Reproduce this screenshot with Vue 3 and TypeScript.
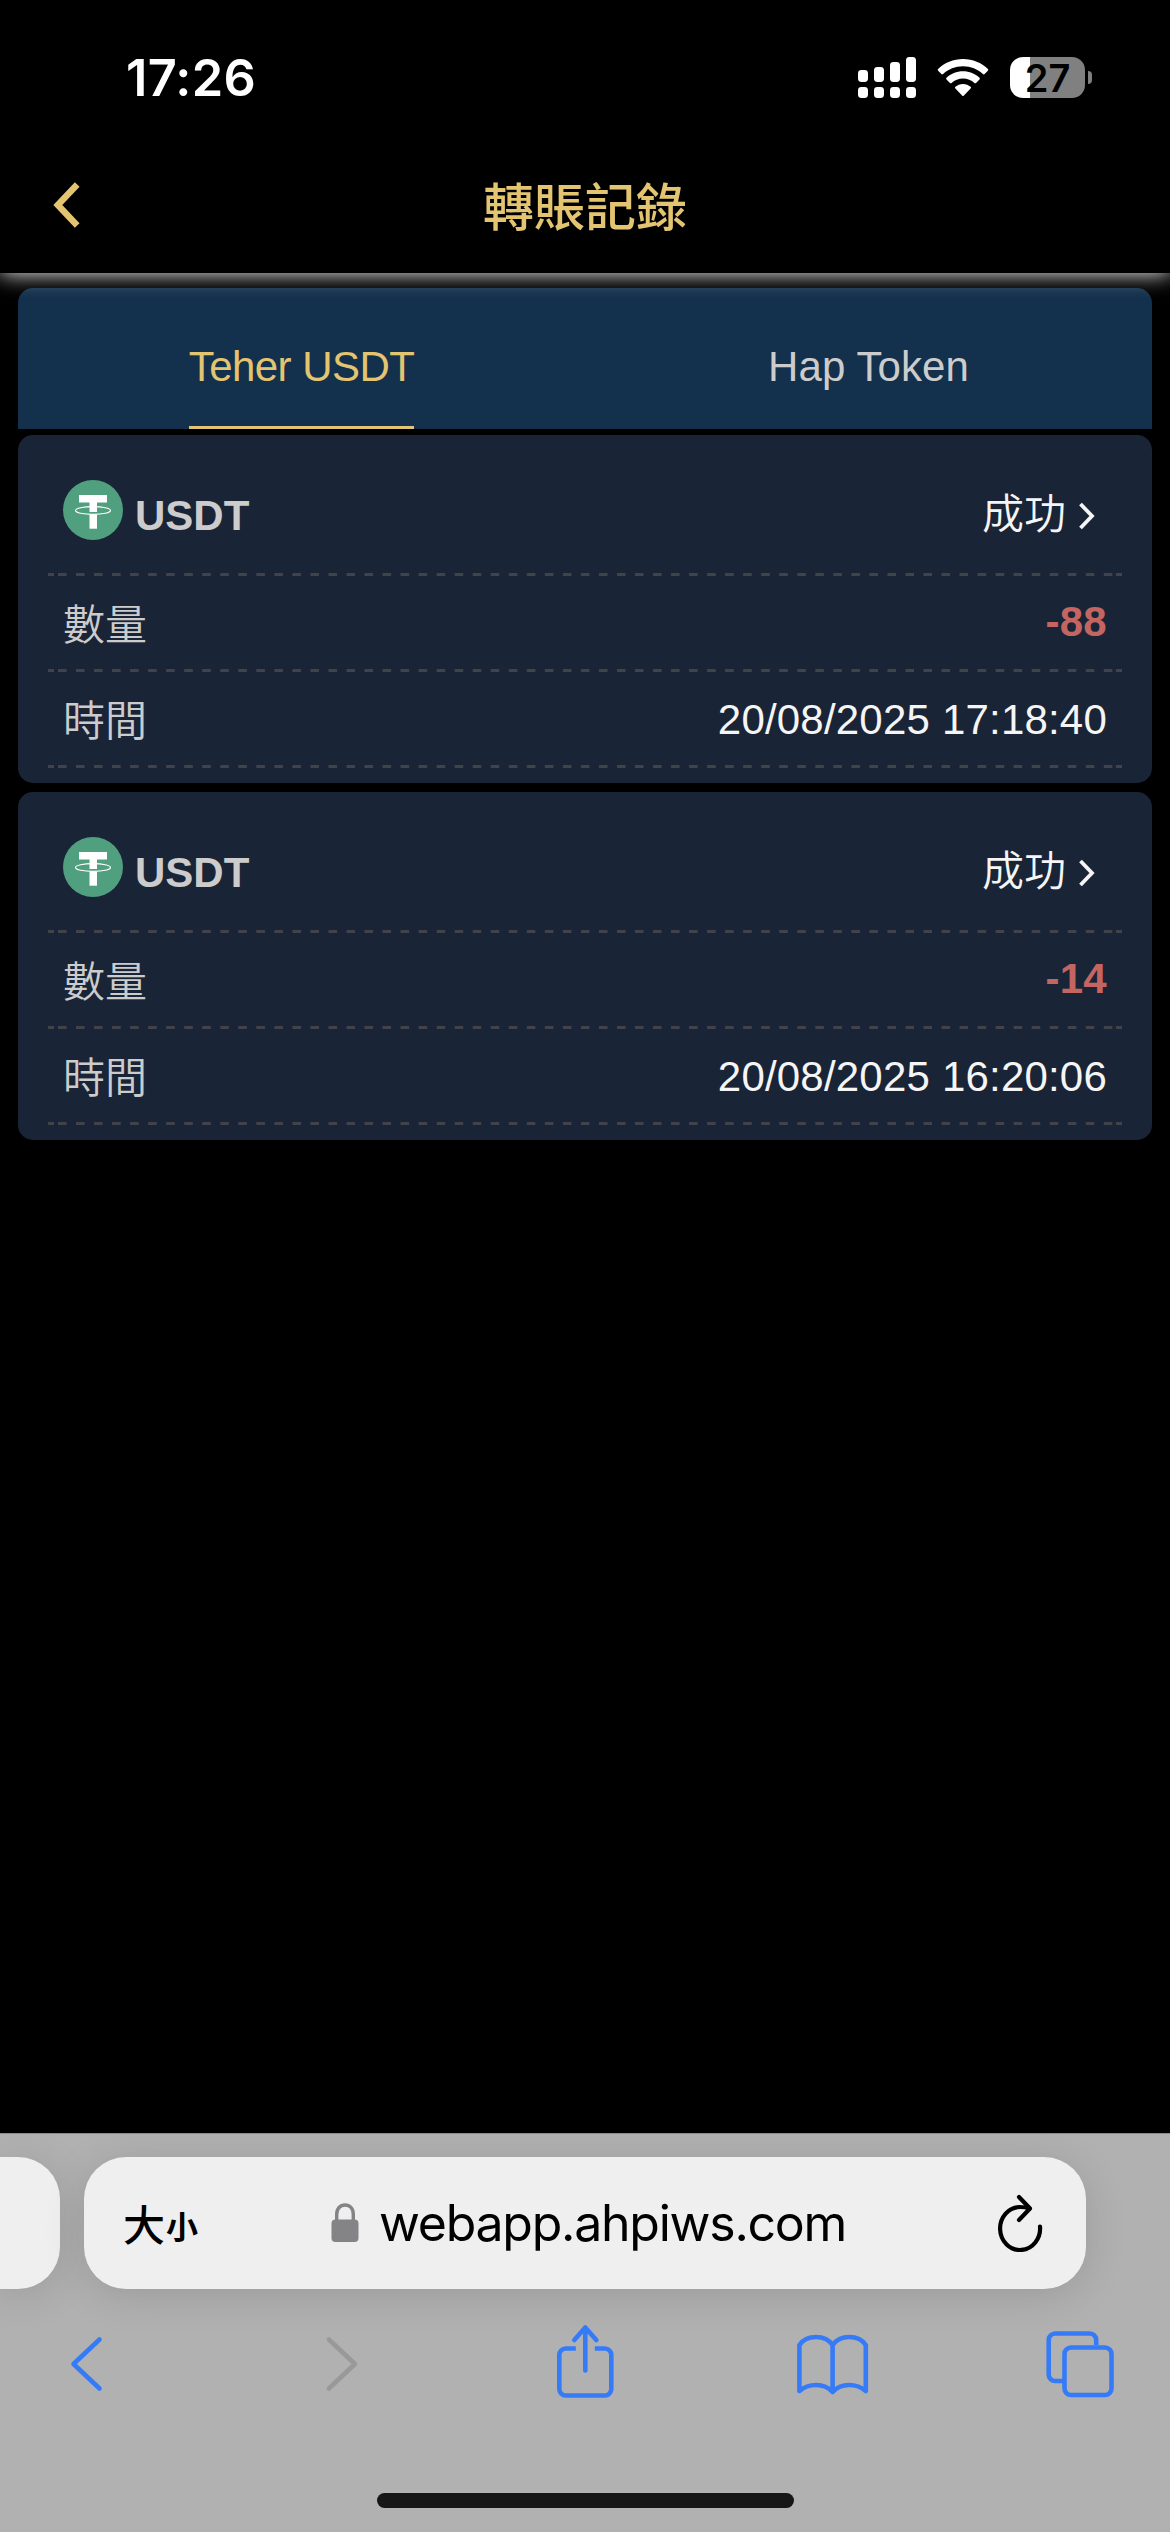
<script setup lang="ts">
interface TransferRecord {
  token: string
  status: string
  amount: string
  time: string
}

const tabs: string[] = ['Teher USDT', 'Hap Token']
const activeTab = 0

const records: TransferRecord[] = [
  { token: 'USDT', status: '成功', amount: '-88', time: '20/08/2025 17:18:40' },
  { token: 'USDT', status: '成功', amount: '-14', time: '20/08/2025 16:20:06' },
]

const signal = [12, 15, 20, 25]
</script>

<template>
  <div class="phone">
    <div class="status">
      <span class="clock">17:26</span>
      <div class="indicators">
        <svg class="cell" width="60" height="42" viewBox="0 0 60 42" fill="#fff">
          <template v-for="(h, i) in signal" :key="i">
            <rect :x="1 + i * 16" :y="25 - h" width="10" :height="h" rx="3.4" />
            <rect :x="1 + i * 16" y="30" width="10" height="11" rx="3.4" />
          </template>
        </svg>
        <svg class="wifi" width="52" height="40" viewBox="0 0 52 40" fill="#fff">
          <path d="M26 2C16.300 2 7.500 5.800 1.100 12a1.200 1.200 0 0 0 0 1.700L4.400 17a1.200 1.200 0 0 0 1.700 0C11.300 12.100 18.300 9.200 26 9.200S40.700 12.100 45.900 17a1.200 1.200 0 0 0 1.700 0l3.300-3.300a1.200 1.200 0 0 0 0-1.700C44.500 5.800 35.700 2 26 2Z" />
          <path d="M26 14.300c-6.400 0-12.200 2.500-16.500 6.500a1.200 1.200 0 0 0 0 1.700l3.500 3.400a1.200 1.200 0 0 0 1.600 0c3-2.700 7-4.400 11.400-4.400s8.400 1.700 11.400 4.400a1.200 1.200 0 0 0 1.600 0l3.500-3.400a1.200 1.200 0 0 0 0-1.700c-4.300-4-10.100-6.500-16.500-6.500Z" />
          <path d="M26 27c-2.900 0-5.600 1.100-7.600 2.800a1.200 1.200 0 0 0 0 1.800l6.700 6.900a1.200 1.200 0 0 0 1.800 0l6.700-6.900a1.200 1.200 0 0 0 0-1.800C31.600 28.100 28.900 27 26 27Z" />
        </svg>
        <div class="battery">
          <div class="cellbox"><span>27</span></div>
          <i class="nub"></i>
        </div>
      </div>
    </div>

    <header class="bar">
      <svg class="back" width="32" height="50" viewBox="0 0 32 50" fill="none" stroke="#e3c470" stroke-width="6.500">
        <path d="M28.200 4.500 8.800 25 28.200 45.500" />
      </svg>
      <h1>轉賬記錄</h1>
    </header>

    <main>
      <nav class="tabs">
        <div v-for="(t, i) in tabs" :key="t" class="tab">
          <span :class="{ active: i === activeTab }">{{ t }}</span>
        </div>
      </nav>

      <section v-for="r in records" :key="r.time" class="card">
        <div class="row head">
          <svg class="coin" width="60" height="60" viewBox="0 0 60 60">
            <circle cx="30" cy="30" r="30" fill="#509f7e" />
            <path d="M16 15h28v7.500h-10v9.500h-7.500v-9.500H16Z" fill="#fff" />
            <ellipse cx="30" cy="30.500" rx="17.500" ry="3.900" fill="none" stroke="#fff" stroke-width="1.200" />
            <path d="M26.500 34.500h7.500v14.200h-7.500Z" fill="#fff" />
          </svg>
          <b>{{ r.token }}</b>
          <span class="state">{{ r.status }}</span>
          <svg class="more" width="20" height="30" viewBox="0 0 20 30" fill="none" stroke="#f5f5f5" stroke-width="3.800">
            <path d="M3.500 3 15 15 3.500 27" />
          </svg>
        </div>
        <div class="row">
          <span class="label">數量</span>
          <strong>{{ r.amount }}</strong>
        </div>
        <div class="row">
          <span class="label">時間</span>
          <time>{{ r.time }}</time>
        </div>
      </section>
    </main>

    <footer>
      <div class="pills">
        <div class="pill previous"></div>
        <div class="pill address">
          <span class="big">大</span><span class="small">小</span>
          <svg class="lock" width="28" height="40" viewBox="0 0 28 40">
            <path d="M5.700 18V11.500C5.700 5.500 9.200 2 14 2s8.300 3.500 8.300 9.500V18" fill="none" stroke="#848486" stroke-width="3.400" />
            <rect x=".500" y="16.500" width="27" height="22.500" rx="4" fill="#848486" />
          </svg>
          <span class="url">webapp.ahpiws.com</span>
          <svg class="reload" width="48" height="58" viewBox="0 0 48 58" fill="none" stroke="#000" stroke-width="4.200" stroke-linecap="round" stroke-linejoin="round">
            <path d="M44 32.500A20 21.500 0 1 1 24 13c3.500 0 6 .4 9.500 1.500" />
            <path d="M23 3 34 14.500 23 26" />
          </svg>
        </div>
      </div>
      <div class="tools">
        <svg width="76" height="80" viewBox="52 2324 76 80"><path d="M99.500 2339.500 73.500 2364 99.500 2388.500" /></svg>
        <svg width="76" height="80" viewBox="299.600 2324 76 80" class="off"><path d="M328.500 2339.500 354.500 2364 328.500 2388.500" /></svg>
        <svg width="76" height="80" viewBox="547.200 2324 76 80">
          <path class="butt" d="M576 2348.500H566a6.500 6.500 0 0 0-6.500 6.500v34a6.500 6.500 0 0 0 6.500 6.500h39a6.500 6.500 0 0 0 6.500-6.500v-34a6.500 6.500 0 0 0-6.500-6.500h-10" />
          <path d="M585.500 2370.500V2328M574.500 2340l11-12.500 11 12.500" />
        </svg>
        <svg width="76" height="80" viewBox="794.900 2324 76 80">
          <path d="M832.500 2345c-3.500-5-9.500-8-16.500-8s-13.500 3.200-16.700 8v46c4-3.500 10-6 16.700-6s12.500 2.500 16.500 7c4-4.500 10-7 16.500-7s12.700 2.500 16.700 6v-46c-3.200-4.800-9.700-8-16.700-8s-13 3-16.500 8Zm0 0v46" />
        </svg>
        <svg width="76" height="80" viewBox="1042.500 2324 76 80">
          <path class="butt" d="M1095.700 2345v-5a6.500 6.500 0 0 0-6.500-6.500h-34.500a6.500 6.500 0 0 0-6.500 6.500v34.500a6.500 6.500 0 0 0 6.500 6.500h8" />
          <rect x="1064" y="2347.500" width="47" height="47.500" rx="6.500" />
        </svg>
      </div>
      <div class="home"></div>
    </footer>
  </div>
</template>

<style>
html,
body {
  background: #000;
}
</style>

<style scoped>
* {
  box-sizing: border-box;
}
.phone {
  width: 1170px;
  height: 2532px;
  display: flex;
  flex-direction: column;
  overflow: hidden;
  background: #000;
  font-family: "Liberation Sans", "Noto Sans CJK TC", sans-serif;
  font-size: 42px;
}
.status {
  flex: none;
  height: 141px;
  padding: 47px 78px 0 126px;
  display: flex;
  justify-content: space-between;
  align-items: flex-start;
  font-family: Inter, sans-serif;
  color: #fff;
}
.clock {
  font-size: 50.5px;
  line-height: 62px;
  font-weight: 600;
  letter-spacing: 0.3px;
}
.indicators {
  display: flex;
  padding-top: 10px;
}
.wifi {
  margin: 0 21px 0 20px;
}
.battery {
  display: flex;
  align-items: center;
  height: 41px;
}
.cellbox {
  width: 75px;
  height: 41px;
  border-radius: 13px;
  background: linear-gradient(90deg, #fff 20px, #808080 20px);
  color: #000;
  font-size: 38px;
  font-weight: 600;
  line-height: 42px;
  text-align: center;
}
.nub {
  width: 4px;
  height: 13px;
  margin-left: 3px;
  border-radius: 0 6px 6px 0;
  background: #808080;
}
.bar {
  position: relative;
  z-index: 1;
  flex: none;
  height: 132px;
  display: flex;
  align-items: center;
  justify-content: center;
  background: #000;
  clip-path: inset(0 0 -60px 0);
  box-shadow: 0 0 21px #fff;
}
.back {
  position: absolute;
  left: 49px;
  top: 39px;
}
h1 {
  margin: 0;
  padding-top: 3px;
  font-size: 51px;
  line-height: 72px;
  font-weight: 500;
  color: #e3c470;
}
main {
  flex: none;
  height: 1860px;
  padding: 15px 18px 0;
}
.tabs {
  height: 141px;
  display: grid;
  grid-template-columns: 1fr 1fr;
  border-radius: 15px 15px 0 0;
  background: #13314c;
  color: #ccc;
  margin-bottom: 6px;
}
.tab {
  display: flex;
  justify-content: center;
}
.tab span {
  height: 141px;
  line-height: 158px;
  letter-spacing: 0.1px;
}
.tab .active {
  color: #e3c470;
  letter-spacing: -0.55px;
  border-bottom: 3px solid #e3c470;
}
.card {
  height: 348px;
  margin-bottom: 9px;
  padding: 0 30px;
  border-radius: 15px;
  background: #1a2437;
  color: #ccc;
}
.row {
  height: 96px;
  padding: 0 15px 3px;
  display: flex;
  align-items: center;
  justify-content: space-between;
  background:
    linear-gradient(#42424b, #42424b) 0 100% / 6px 3px no-repeat,
    linear-gradient(#42424b, #42424b) 100% 100% / 6px 3px no-repeat,
    linear-gradient(90deg, #42424b 9px, transparent 9px) 10px 100% / 18.040px 3px repeat-x;
}
.head {
  height: 141px;
  justify-content: flex-start;
}
.coin {
  margin-top: 12px;
}
.head b {
  margin: 24px auto 0 12px;
}
.state {
  color: #f5f5f5;
  font-weight: 350;
  margin-top: 13px;
}
.more {
  margin: 24px 10px 0 11px;
}
.label {
  font-weight: 350;
  padding-bottom: 3px;
}
strong {
  color: #c46562;
  padding-bottom: 1px;
  letter-spacing: 0.3px;
}
time {
  color: #f5f5f5;
  padding-top: 3px;
  letter-spacing: 0.2px;
}
footer {
  flex: 1;
  display: flex;
  flex-direction: column;
  border-top: 1px solid #8a8a8a;
  background: #b1b1b1;
  overflow: hidden;
}
.pills {
  display: flex;
  gap: 24px;
  padding-top: 23px;
}
.pill {
  height: 132px;
  background: #efefef;
  box-shadow: 0 6px 42px rgba(0, 0, 0, 0.13);
}
.previous {
  width: 60px;
  border-radius: 0 42px 42px 0;
}
.address {
  width: 1002px;
  border-radius: 42px;
  display: flex;
  align-items: center;
  padding-left: 39px;
  color: #000;
}
.big {
  width: 43px;
  font-size: 42px;
  font-weight: 500;
  margin-top: -2px;
}
.small {
  width: 33px;
  font-size: 32px;
  font-weight: 700;
  margin-top: 4px;
}
.lock {
  margin-left: 132px;
}
.url {
  margin-left: 20px;
  font-family: Inter, sans-serif;
  font-size: 50px;
  letter-spacing: -1.25px;
}
.reload {
  margin-left: auto;
  margin-right: 42px;
}
.tools {
  height: 80px;
  margin-top: 35px;
  padding: 0 51.5px 0 52px;
  display: flex;
  justify-content: space-between;
}
.tools svg {
  fill: none;
  stroke: #357bf7;
  stroke-width: 4.6;
  stroke-linecap: round;
  stroke-linejoin: round;
}
.tools .butt {
  stroke-linecap: butt;
}
.tools .off {
  stroke: #999;
}
.home {
  width: 417px;
  height: 15px;
  margin: 89px auto 0;
  border-radius: 8px;
  background: #161616;
}
</style>
